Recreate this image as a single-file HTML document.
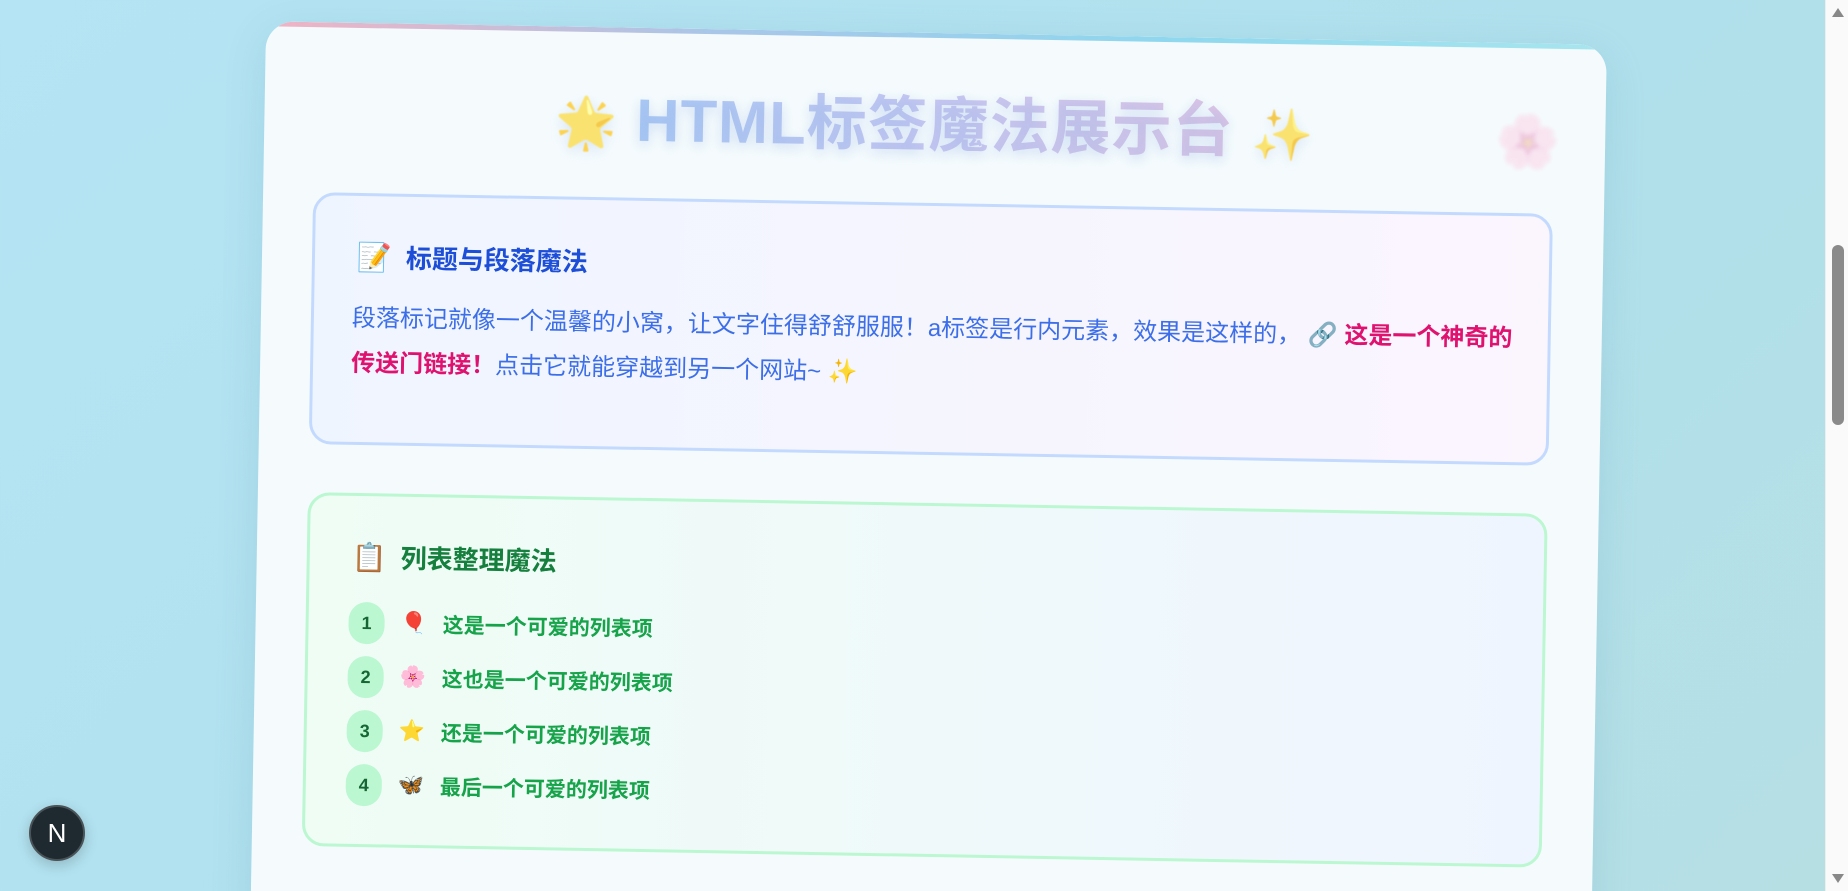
<!DOCTYPE html>
<html><head><meta charset="utf-8"><style>
*{margin:0;padding:0;box-sizing:border-box}
html,body{width:1848px;height:891px;overflow:hidden}
body{background:linear-gradient(135deg,#b5e4f4 0%,#b0e0ec 60%,#b6dfe4 100%);font-family:"Liberation Sans","Noto Sans CJK SC",sans-serif;position:relative}
.sb{position:absolute;right:0;top:0;width:23px;height:891px;background:#fafafa;border-left:1px solid #eee}
.sb .th{position:absolute;left:6px;top:245px;width:12px;height:180px;background:#8a8a8a;border-radius:6px}
.sb .up{position:absolute;left:6px;top:8px;border:6px solid transparent;border-bottom:9px solid #888;border-top:0}
.sb .dn{position:absolute;left:6px;bottom:8px;border:6px solid transparent;border-top:9px solid #888;border-bottom:0}
.card{position:absolute;left:266px;top:33px;width:1341px;height:1000px;background:#f5fbfd;border-radius:28px;transform:rotate(1deg);transform-origin:50% 0;box-shadow:0 10px 40px rgba(80,150,180,.2);overflow:hidden}
.card:before{content:"";position:absolute;left:0;top:0;right:0;height:5px;background:linear-gradient(90deg,#f0b3c4,#a9c6e8,#8fd7ee,#a8e6ee)}
.title{position:absolute;left:0;right:0;top:44px;text-align:center;font-size:60px;font-weight:bold;letter-spacing:1px;color:#b8cdf4;text-shadow:0 4px 12px rgba(150,180,230,.4)}
.title span.g{background:linear-gradient(90deg,#a9c8f5,#c7c7f1,#ddc4e4);-webkit-background-clip:text;color:transparent}
.title .e{font-size:50px;filter:blur(.5px);opacity:.7}
.flo{position:absolute;right:45px;top:68px;font-size:52px;opacity:.35;filter:blur(2px)}
.sec{position:absolute;left:50px;width:1240px;border-radius:22px;border:3px solid}
.s1{top:170px;height:252px;border-color:#c3dafe;background:linear-gradient(90deg,#eff5ff,#fbf5fe)}
.s2{top:470px;height:354px;border-color:#bbf7d0;background:linear-gradient(90deg,#effdf5,#eff5ff)}
h2{position:absolute;left:42px;top:42px;font-size:26px;font-weight:bold}
h2 i{font-style:normal;margin-right:14px;font-size:28px}
.s1 h2{color:#1d4ed8}.s2 h2{color:#15803d}
.p{position:absolute;left:38px;top:100px;width:1170px;font-size:24px;line-height:45px;color:#3b6ee8}
.p b{color:#e0126f}
.li{position:absolute;left:40px;font-size:21px;font-weight:bold;color:#16a34a;display:flex;align-items:center}
.num{width:36px;height:42px;border-radius:18px;background:#bbf7d0;color:#166534;font-size:18px;display:flex;align-items:center;justify-content:center;margin-right:16px}
.li .ic{margin-right:16px;font-size:21px}
.nb{position:absolute;left:29px;top:805px;width:56px;height:56px;border-radius:50%;background:#1f2a30;border:2px solid #4a5358;color:#fff;font-size:26px;display:flex;align-items:center;justify-content:center;box-shadow:0 4px 14px rgba(0,0,0,.2)}
</style></head><body>
<div class="card">
 <div class="title"><span class="e">🌟</span> <span class="g">HTML标签魔法展示台</span> <span class="e">✨</span></div>
 <div class="flo">🌸</div>
 <div class="sec s1">
  <h2><i>📝</i>标题与段落魔法</h2>
  <div class="p">段落标记就像一个温馨的小窝，让文字住得舒舒服服！a标签是行内元素，效果是这样的， 🔗 <b>这是一个神奇的传送门链接！</b>点击它就能穿越到另一个网站~ ✨</div>
 </div>
 <div class="sec s2">
  <h2><i>📋</i>列表整理魔法</h2>
  <div class="li" style="top:106px"><span class="num">1</span><span class="ic">🎈</span>这是一个可爱的列表项</div>
  <div class="li" style="top:160px"><span class="num">2</span><span class="ic">🌸</span>这也是一个可爱的列表项</div>
  <div class="li" style="top:214px"><span class="num">3</span><span class="ic">⭐</span>还是一个可爱的列表项</div>
  <div class="li" style="top:268px"><span class="num">4</span><span class="ic">🦋</span>最后一个可爱的列表项</div>
 </div>
</div>
<div class="nb">N</div>
<div class="sb"><div class="up"></div><div class="th"></div><div class="dn"></div></div>
</body></html>
